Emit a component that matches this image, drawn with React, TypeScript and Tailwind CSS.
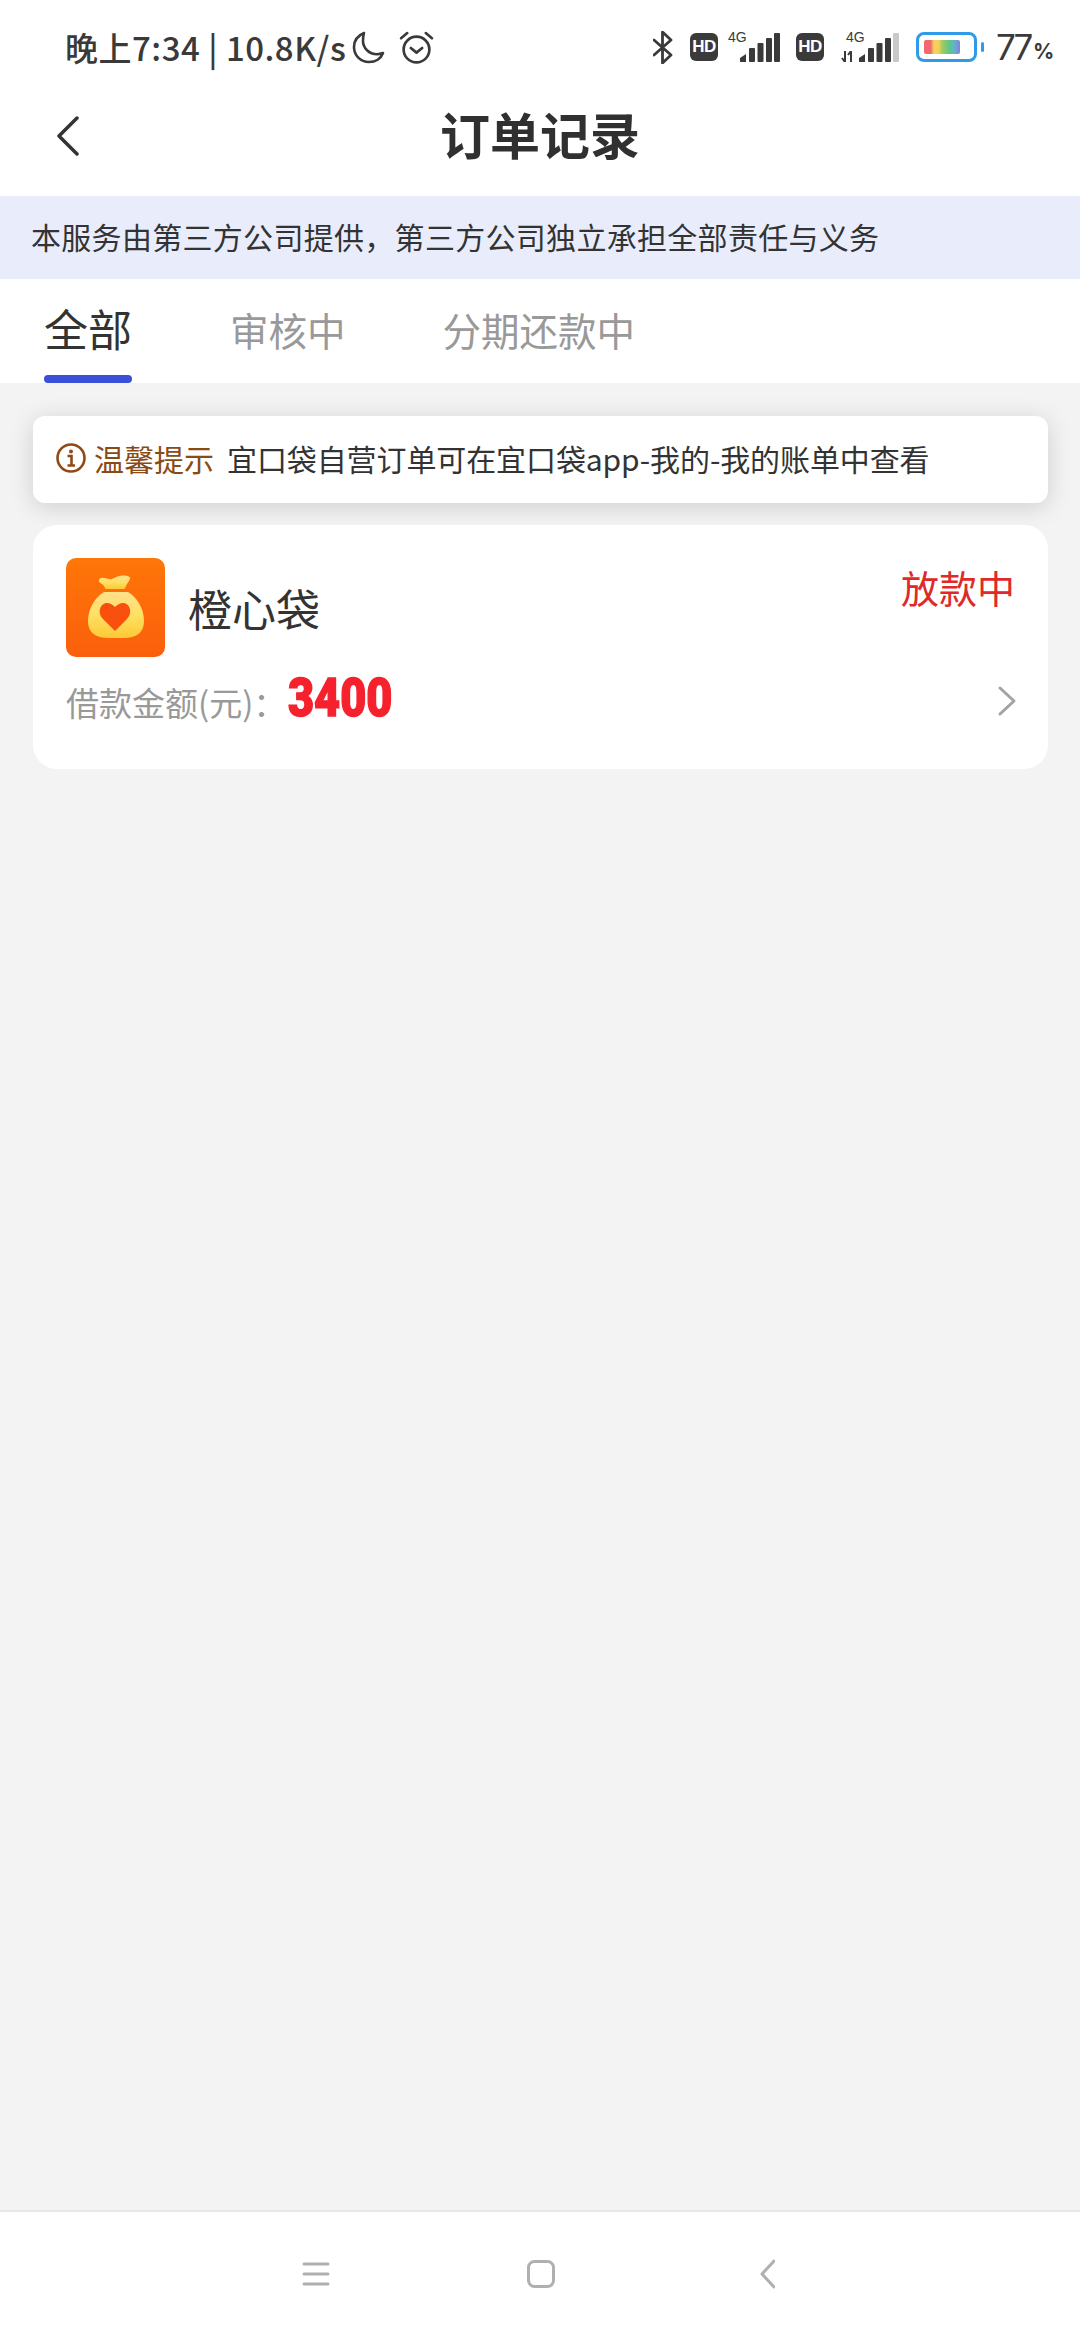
const cjk = "font-['Noto_Sans_CJK_SC','Noto_Sans',sans-serif]";

const tabs = ["审核中", "分期还款中"];

const Signal = ({ lastGray = false }: { lastGray?: boolean }) => (
  <svg width="40" height="29" viewBox="0 0 40 29">
    <path d="M0 29v-4l6-4v8z" fill="#3a3a3a" />
    <rect x="9" y="15" width="6" height="14" rx="1" fill="#3a3a3a" />
    <rect x="17.5" y="10" width="6" height="19" rx="1" fill="#3a3a3a" />
    <rect x="26" y="5" width="6" height="24" rx="1" fill="#3a3a3a" />
    <rect x="34" y="0" width="6" height="29" rx="1" fill={lastGray ? "#c9c9c9" : "#3a3a3a"} />
  </svg>
);

const HdBadge = () => (
  <div className="w-[28px] h-[28px] rounded-[6px] bg-[#3a3a3a] flex items-center justify-center text-white text-[17px] font-bold font-['Liberation_Sans',sans-serif] tracking-[-0.5px]">
    HD
  </div>
);

const StatusBar = () => (
  <div className="h-[64px] pt-[30px] pl-[65px] pr-[30px] flex items-center justify-between text-[#3a3a3a]">
    <div className="flex items-center">
      <span className={`${cjk} text-[33px] font-medium leading-none tracking-[0.5px] whitespace-nowrap w-[287px]`}>
        晚上7:34 | 10.8K/s
      </span>
      <svg width="33" height="33" viewBox="0 0 33 33" fill="none" stroke="#3a3a3a" strokeWidth="2.6" strokeLinejoin="round">
        <path d="M12 2C6 4.500 2 9.500 2 16c0 8.500 6.500 15 15 15 6.500 0 12-3.500 14-9-2 .8-4 1.200-6 1.200C17 23.200 11 17 11 10c0-3 .3-5.500 1-8z" />
      </svg>
      <svg className="ml-[14px]" width="35" height="35" viewBox="0 0 34 34" fill="none" stroke="#3a3a3a" strokeWidth="2.6" strokeLinecap="round" strokeLinejoin="round">
        <circle cx="17" cy="19" r="12.500" />
        <path d="M11.500 17.500l5.500 4.500 5.500-4.500" />
        <path d="M2 8l6-5M32 8l-6-5" />
      </svg>
    </div>
    <div className="flex items-center">
      <svg width="20" height="33" viewBox="0 0 20 33" fill="none" stroke="#3a3a3a" strokeWidth="2.800" strokeLinejoin="round" strokeLinecap="round">
        <path d="M1 9l17 15-8.500 8V1L18 9 1 24" />
      </svg>
      <div className="ml-[17px]">
        <HdBadge />
      </div>
      <div className="relative ml-[22px] w-[40px] h-[29px]">
        <span className="absolute left-[-12px] top-[-3px] text-[14px] leading-none font-['Liberation_Sans',sans-serif]">4G</span>
        <Signal />
      </div>
      <div className="ml-[16px]">
        <HdBadge />
      </div>
      <div className="relative ml-[35px] w-[38px] h-[29px]">
        <span className="absolute left-[-13px] top-[-3px] text-[14px] leading-none font-['Liberation_Sans',sans-serif]">4G</span>
        <svg className="absolute left-[-18px] bottom-0" width="13" height="11" viewBox="0 0 13 11" fill="none" stroke="#3a3a3a" strokeWidth="2">
          <path d="M4 0v11M1 7l3 4M10 11V0M7 4l3-4" />
        </svg>
        <Signal lastGray />
      </div>
      <div className="ml-[19px] w-[61px] h-[30px] rounded-[8px] border-[3px] border-[#2f9be8] p-[5px]">
        <div className="w-[36px] h-full rounded-[2px] bg-[linear-gradient(90deg,#f0696c_0%,#f0696c_18%,#f2d25c_28%,#f2d25c_40%,#9cca5e_52%,#5cc48e_72%,#5cb8c8_84%,#8a7be8_100%)]" />
      </div>
      <div className="ml-[4px] w-[3px] h-[10px] rounded-full bg-[#2f9be8]" />
      <span className="ml-[12px] w-[33px] text-[35px] leading-none tracking-[-3px] font-['Inter',sans-serif]">77</span>
      <span className="ml-[4px] w-[17px] mt-[8px] text-[21px] leading-none font-bold tracking-[-1px] font-['Inter',sans-serif]">%</span>
    </div>
  </div>
);

const AppLogo = () => (
  <svg width="99" height="99" viewBox="0 0 99 99" className="rounded-[10px] shrink-0">
    <defs>
      <linearGradient id="bg" x1="0" y1="0" x2="0" y2="1">
        <stop offset="0" stopColor="#ff7608" />
        <stop offset="1" stopColor="#fb5f0c" />
      </linearGradient>
      <linearGradient id="bag" x1="0" y1="0" x2="0" y2="1">
        <stop offset="0" stopColor="#ffe08a" />
        <stop offset="0.5" stopColor="#ffe063" />
        <stop offset="1" stopColor="#fdc935" />
      </linearGradient>
    </defs>
    <rect width="99" height="99" fill="url(#bg)" />
    <path d="M35 20c4-1 8 2 11 1 3-1 5-3 8-3 4-1 10 0 10 2 0 3-3 5-4 8-1 2-1 3-2 3H40c-1 0-1-2-2-3-1-2-5-3-5-5 0-2 1-3 2-3z" fill="url(#bag)" />
    <path d="M38 34h24c9 5 16 17 16 29 0 12-8 17-20 17H42c-12 0-20-5-20-17 0-12 7-24 16-29z" fill="url(#bag)" />
    <path d="M49 73L37 61c-6-6-3-16 4-16 3 0 6 2 8 4 2-2 5-4 8-4 7 0 10 10 4 16z" fill="#f9500e" />
  </svg>
);

export default function App() {
  return (
    <div className={`${cjk} w-[1080px] h-[2340px] bg-[#f3f3f3] flex flex-col overflow-hidden`}>
      <div className="bg-white">
        <StatusBar />
        <div className="h-[132px] relative flex items-center justify-center pt-[5px]">
          <svg className="absolute left-[56px] top-[52px]" width="24" height="40" viewBox="0 0 24 40" fill="none" stroke="#333333" strokeWidth="3.500" strokeLinecap="round" strokeLinejoin="round">
            <path d="M21 2L3 20l18 18" />
          </svg>
          <span className="text-[50px] font-bold text-[#303030] leading-none">订单记录</span>
        </div>
      </div>

      <div className="h-[83px] bg-[#e9edfb] pl-[31px] pb-[3px] flex items-center text-[30px] tracking-[0.3px] text-[#333333] whitespace-nowrap leading-none">
        本服务由第三方公司提供，第三方公司独立承担全部责任与义务
      </div>

      <div className="h-[104px] bg-white pl-[44px] flex items-start">
        <div className="h-full w-[88px] flex flex-col items-center justify-between">
          <span className="text-[44px] leading-none text-[#333333] mt-[27px] whitespace-nowrap">全部</span>
          <div className="w-[88px] h-[8px] rounded-full bg-[#3b50d8]" />
        </div>
        {tabs.map((t, i) => (
          <span
            key={t}
            className={`text-[38.500px] leading-none text-[#999999] mt-[31px] whitespace-nowrap ${i === 0 ? "ml-[98px]" : "ml-[97px]"}`}
          >
            {t}
          </span>
        ))}
      </div>

      <div className="flex-1 pl-[33px] pr-[32px] pt-[33px] flex flex-col gap-[22px]">
        <div className="h-[87px] rounded-[12px] bg-white shadow-[0_4px_24px_rgba(0,0,0,0.15)] pl-[23px] pb-[4px] flex items-center whitespace-nowrap">
          <svg width="30" height="30" viewBox="0 0 30 30" fill="none" stroke="#8f4a17" strokeWidth="2.600" className="shrink-0">
            <circle cx="15" cy="15" r="13.500" />
            <circle cx="15" cy="8.500" r="2" fill="#8f4a17" stroke="none" />
            <path d="M11.500 13H15.500V22M11.500 22.500H19" />
          </svg>
          <span className="ml-[8px] text-[30px] leading-none text-[#8a4a14]">温馨提示</span>
          <span className="ml-[13px] text-[30px] leading-none tracking-[-0.1px] text-[#333333]">宜口袋自营订单可在宜口袋app-我的-我的账单中查看</span>
        </div>

        <div className="h-[244px] rounded-[24px] bg-white pl-[33px] pr-[33px] pt-[33px]">
          <div className="flex items-start justify-between">
            <div className="flex items-center">
              <AppLogo />
              <span className="ml-[23px] text-[44px] leading-none text-[#333333] whitespace-nowrap">橙心袋</span>
            </div>
            <span className="text-[38px] leading-none text-[#e02a2a] mt-[10px] whitespace-nowrap">放款中</span>
          </div>
          <div className="flex items-center justify-between mt-[12px] h-[64px]">
            <div className="flex items-center">
              <span className="text-[33px] leading-none text-[#999999] w-[222px] mt-[3px] whitespace-nowrap">借款金额(元)：</span>
              <span className="text-[53px] leading-none font-black text-[#f5222d] font-['Roboto',sans-serif] scale-x-[0.85] origin-left mt-[-5px] [-webkit-text-stroke:1.500px_#f5222d]">3400</span>
            </div>
            <svg className="mr-[-2px]" width="20" height="32" viewBox="0 0 20 32" fill="none" stroke="#a3a3a3" strokeWidth="3" strokeLinecap="round" strokeLinejoin="round">
              <path d="M3 3l14 13L3 29" />
            </svg>
          </div>
        </div>
      </div>

      <div className="h-[130px] bg-white border-t-[2px] border-[#e8e8e8] flex items-center pb-[4px] pl-[302px]">
        <svg width="28" height="26" viewBox="0 0 28 26" fill="none" stroke="#b0b0b0" strokeWidth="3" strokeLinecap="round">
          <path d="M2 3h24M2 13h24M2 23h24" />
        </svg>
        <svg className="ml-[197px]" width="28" height="28" viewBox="0 0 28 28" fill="none" stroke="#b0b0b0" strokeWidth="3">
          <rect x="1.500" y="1.500" width="25" height="25" rx="6" />
        </svg>
        <svg className="ml-[205px]" width="15" height="30" viewBox="0 0 15 30" fill="none" stroke="#b0b0b0" strokeWidth="3" strokeLinecap="round" strokeLinejoin="round">
          <path d="M14 2L2 15l12 13" />
        </svg>
      </div>
    </div>
  );
}
